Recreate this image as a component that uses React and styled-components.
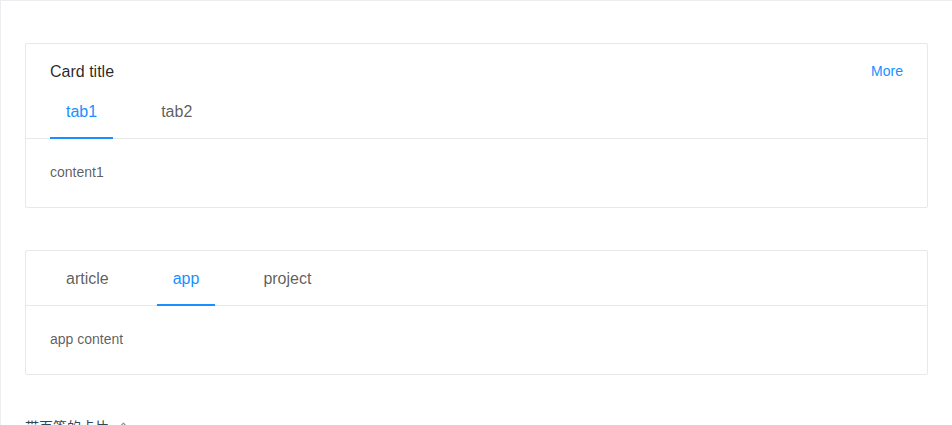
import { useState } from 'react';
import styled, { createGlobalStyle } from 'styled-components';
import { AiOutlineEdit } from 'react-icons/ai';

const GlobalStyle = createGlobalStyle`
  body {
    margin: 0;
    font-family: "Liberation Sans", Arial, "Noto Sans CJK SC", sans-serif;
    font-size: 14px;
    line-height: 1.5;
    color: rgba(0, 0, 0, 0.65);
    background: #fff;
    overflow: hidden;
  }
`;

const CodeBox = styled.section`
  border: 1px solid #ebedf0;
  border-right: none;
  border-bottom: none;
  min-height: 100vh;
`;

const Demo = styled.div`
  padding: 42px 24px 42px;
  display: flex;
  flex-direction: column;
  gap: 42px;
`;

const Card = styled.div`
  border: 1px solid #e8e8e8;
  border-radius: 2px;
  background: #fff;
`;

const CardHead = styled.div`
  padding: 0 24px;
  border-bottom: 1px solid #e8e8e8;
`;

const HeadRow = styled.div`
  display: flex;
  align-items: flex-start;
  justify-content: space-between;
  padding-top: 16px;
`;

const CardTitle = styled.div`
  font-size: 16px;
  line-height: 24px;
  font-weight: 500;
  color: rgba(0, 0, 0, 0.85);
`;

const MoreLink = styled.a`
  color: #1890ff;
  text-decoration: none;
  font-size: 14px;
  line-height: 22px;
  cursor: pointer;
`;

const TabBar = styled.div`
  display: flex;
  gap: 32px;
  margin-bottom: -1px;
`;

const Tab = styled.div`
  position: relative;
  padding: 16px 16px 15px;
  font-size: 16px;
  line-height: 24px;
  color: ${(p) => (p.$active ? '#1890ff' : 'rgba(0, 0, 0, 0.65)')};
  cursor: pointer;

  &::after {
    content: '';
    position: absolute;
    left: 0;
    right: 0;
    bottom: 0;
    height: 2px;
    background: ${(p) => (p.$active ? '#1890ff' : 'transparent')};
  }
`;

const CardBody = styled.div`
  padding: 23px 24px 24px;
  font-size: 14px;
  line-height: 21px;
  color: rgba(0, 0, 0, 0.65);
`;

const MetaTitle = styled.div`
  display: flex;
  align-items: center;
  gap: 5px;
  padding: 0 24px;
  font-size: 14px;
  line-height: 21px;
  color: #314659;

  svg {
    color: rgba(0, 0, 0, 0.45);
  }
`;

const tabList = [
  { key: 'tab1', tab: 'tab1' },
  { key: 'tab2', tab: 'tab2' },
];

const contentList = {
  tab1: 'content1',
  tab2: 'content2',
};

const tabListNoTitle = [
  { key: 'article', tab: 'article' },
  { key: 'app', tab: 'app' },
  { key: 'project', tab: 'project' },
];

const contentListNoTitle = {
  article: 'article content',
  app: 'app content',
  project: 'project content',
};

const TabCard = ({ title, extra, tabs, contents, defaultKey }) => {
  const [active, setActive] = useState(defaultKey);
  return (
    <Card>
      <CardHead>
        {title && (
          <HeadRow>
            <CardTitle>{title}</CardTitle>
            {extra}
          </HeadRow>
        )}
        <TabBar>
          {tabs.map((t) => (
            <Tab key={t.key} $active={t.key === active} onClick={() => setActive(t.key)}>
              {t.tab}
            </Tab>
          ))}
        </TabBar>
      </CardHead>
      <CardBody>{contents[active]}</CardBody>
    </Card>
  );
};

const App = () => {
  return (
    <>
      <GlobalStyle />
      <CodeBox>
        <Demo>
          <TabCard
            title="Card title"
            extra={<MoreLink>More</MoreLink>}
            tabs={tabList}
            contents={contentList}
            defaultKey="tab1"
          />
          <TabCard tabs={tabListNoTitle} contents={contentListNoTitle} defaultKey="app" />
        </Demo>
        <MetaTitle>
          带页签的卡片
          <AiOutlineEdit size={14} />
        </MetaTitle>
      </CodeBox>
    </>
  );
};

export default App;
